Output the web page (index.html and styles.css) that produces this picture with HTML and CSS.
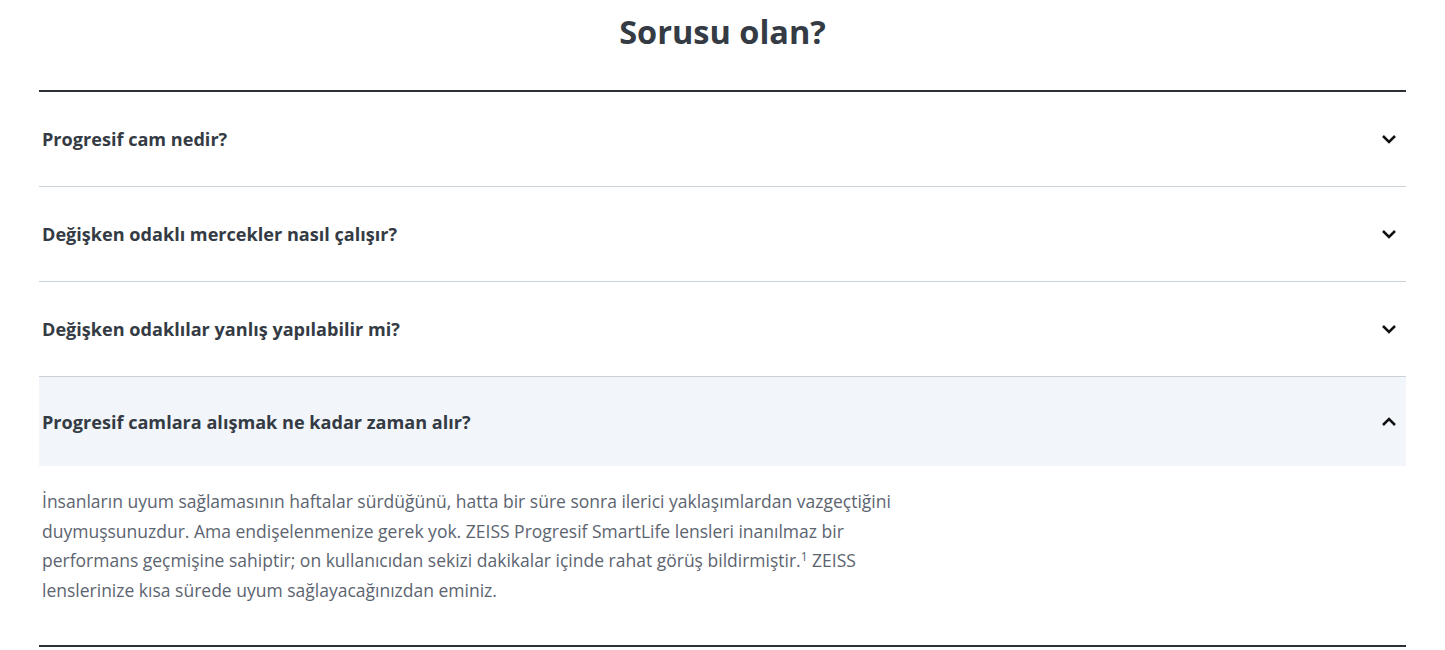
FILE: index.html
```html
<!DOCTYPE html>
<html lang="tr">
<head>
<meta charset="utf-8">
<link rel="stylesheet" href="styles.css">
</head>
<body>
<section class="faq">
  <h2 class="faq-title">Sorusu olan?</h2>
  <div class="faq-list">
    <div class="faq-item">
      <button class="faq-q"><span>Progresif cam nedir?</span>
        <svg class="chev" width="16" height="10" viewBox="0 0 16 10"><path d="M2 2 L8 8 L14 2" fill="none" stroke="#111" stroke-width="2.5"/></svg>
      </button>
    </div>
    <div class="faq-item">
      <button class="faq-q"><span>Değişken odaklı mercekler nasıl çalışır?</span>
        <svg class="chev" width="16" height="10" viewBox="0 0 16 10"><path d="M2 2 L8 8 L14 2" fill="none" stroke="#111" stroke-width="2.5"/></svg>
      </button>
    </div>
    <div class="faq-item">
      <button class="faq-q"><span>Değişken odaklılar yanlış yapılabilir mi?</span>
        <svg class="chev" width="16" height="10" viewBox="0 0 16 10"><path d="M2 2 L8 8 L14 2" fill="none" stroke="#111" stroke-width="2.5"/></svg>
      </button>
    </div>
    <div class="faq-item open">
      <button class="faq-q"><span>Progresif camlara alışmak ne kadar zaman alır?</span>
        <svg class="chev" width="16" height="10" viewBox="0 0 16 10"><path d="M2 8 L8 2 L14 8" fill="none" stroke="#111" stroke-width="2.5"/></svg>
      </button>
      <div class="faq-a">
        <p>İnsanların uyum sağlamasının haftalar sürdüğünü, hatta bir süre sonra ilerici yaklaşımlardan vazgeçtiğini duymuşsunuzdur. Ama endişelenmenize gerek yok. ZEISS Progresif SmartLife lensleri inanılmaz bir performans geçmişine sahiptir; on kullanıcıdan sekizi dakikalar içinde rahat görüş bildirmiştir.<sup>1</sup> ZEISS lenslerinize kısa sürede uyum sağlayacağınızdan eminiz.</p>
      </div>
    </div>
  </div>
</section>
</body>
</html>
```
FILE: styles.css
```css
* { box-sizing: border-box; }
body {
  margin: 0;
  background: #fff;
  font-family: "Open Sans", "Noto Sans", sans-serif;
  color: #343b44;
}
.faq {
  padding: 0 39px;
}
.faq-title {
  margin: 0;
  height: 90px;
  padding-top: 8px;
  text-align: center;
  font-size: 32.5px;
  font-weight: 700;
  line-height: 48px;
  color: #343b44;
}
.faq-list {
  border-top: 2px solid #2a3036;
  border-bottom: 2px solid #2a3036;
}
.faq-item + .faq-item {
  border-top: 1px solid #c9d1d9;
}
.faq-q {
  width: 100%;
  height: 94px;
  display: flex;
  align-items: center;
  justify-content: space-between;
  padding: 0 9px 0 3px;
  border: 0;
  background: transparent;
  font: inherit;
  font-size: 18.1px;
  font-weight: 700;
  color: #343b44;
  text-align: left;
}
.open .faq-q {
  height: 89px;
  background: #f2f6fa;
}
.chev { display: block; }
.faq-a {
  padding: 21px 3px 40px;
}
.faq-a p {
  margin: 0;
  max-width: 870px;
  font-size: 17.5px;
  line-height: 29.6px;
  color: #5c6470;
}
.faq-a sup {
  font-size: 12px;
  line-height: 0;
  vertical-align: 6px;
}
```
